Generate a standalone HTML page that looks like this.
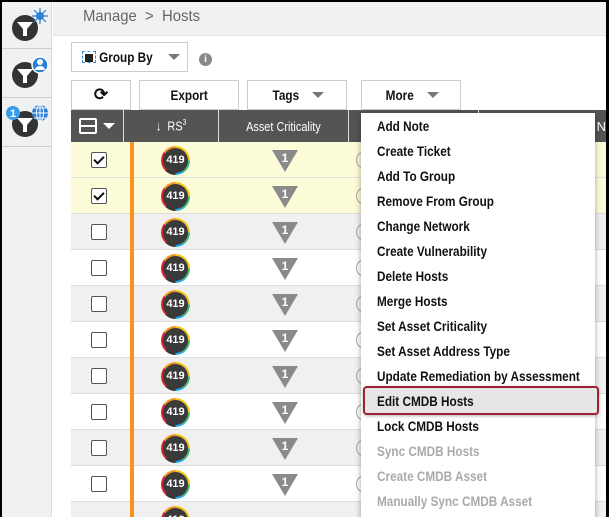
<!DOCTYPE html><html><head><style>
*{margin:0;padding:0;box-sizing:border-box}
body{width:609px;height:517px;overflow:hidden;background:#000;font-family:"Liberation Sans",sans-serif;position:relative}
#f{position:absolute;left:2px;top:2px;width:604px;height:515px;background:#fff;overflow:hidden}
.a{position:absolute}
.n{display:inline-block;transform:scaleX(.84);transform-origin:center;white-space:nowrap}
.side{left:0;top:0;width:50px;height:515px;background:#f0f1f1;border-right:1px solid #ddd}
.hd{left:51px;top:0;width:553px;height:34px;background:#f0f1f1;border-bottom:1px solid #e2e2e2}
.btn{position:absolute;height:30px;border:1px solid #ccc;background:#fff;font-weight:bold;font-size:14px;display:flex;align-items:center;justify-content:center;color:#111;white-space:nowrap}
.car{display:inline-block;width:0;height:0;border-left:6px solid transparent;border-right:6px solid transparent;border-top:6px solid #777;margin-left:10px}
.th{top:108px;height:32px;background:#545454;color:#fff;font-size:13px;display:flex;align-items:center;justify-content:center;border-right:1px solid #ddd;white-space:nowrap}
.row{position:absolute;left:69px;width:535px;height:36px;border-bottom:1px solid #ddd}
.cb{position:absolute;left:20px;top:10px;width:16px;height:16px;border:1px solid #555;background:#fff;border-radius:2px}
.cb.c::after{content:"";position:absolute;left:4px;top:1px;width:4px;height:8px;border:solid #111;border-width:0 2px 2px 0;transform:rotate(45deg)}
.ob{position:absolute;left:59px;top:0;width:4px;height:36px;background:#f7941d}
.bd{position:absolute;left:90px;top:4px;width:29px;height:29px;border-radius:50%;background:conic-gradient(#f7c31d 0 25%,#3cb878 25% 40%,#27aae1 40% 50%,#333 50% 62%,#d9262e 62% 85%,#f7941d 85%);}
.bd i{position:absolute;left:2px;top:2px;width:25px;height:25px;border-radius:50%;background:#3a3a3a;color:#fff;font-style:normal;font-weight:bold;font-size:11px;line-height:25px;text-align:center}
.tr{position:absolute;left:201px;top:8px;width:0;height:0;border-left:13px solid transparent;border-right:13px solid transparent;border-top:22px solid #8a8a8a}
.tr b{position:absolute;left:-13px;width:26px;top:-21px;color:#fff;font-size:12px;text-align:center;line-height:14px}
.ci{position:absolute;left:285px;top:9px;width:18px;height:18px;border-radius:50%;border:1.5px solid #aaa}
.menu{left:359px;top:111px;width:234px;height:410px;background:#fff;box-shadow:0 2px 6px rgba(0,0,0,.35)}
.mi{position:absolute;left:16px;font-weight:bold;font-size:14px;color:#111;transform:scaleX(.84);transform-origin:left;white-space:nowrap;margin-top:-1px}
.dis{color:#aaa}
</style></head><body><div id="f">
<div class="a side"></div>
<div class="a" style="left:0;top:46px;width:50px;border-top:1px solid #ccc"></div>
<div class="a" style="left:0;top:95px;width:50px;border-top:1px solid #ccc"></div>
<div class="a" style="left:0;top:144px;width:50px;border-top:1px solid #ccc"></div>
<svg class="a" style="left:8px;top:6px" width="40" height="36"><circle cx="15" cy="20" r="13" fill="#333"/><path d="M7 14h16l-6 7v7h-4v-7z" fill="#fff"/><circle cx="30" cy="8" r="4" fill="#2a7fd4"/><path d="M30 0v16M22 8h16M24 2l12 12M36 2L24 14" stroke="#2a7fd4" stroke-width="1.2"/></svg>
<svg class="a" style="left:8px;top:52px" width="40" height="36"><circle cx="15" cy="21" r="13" fill="#333"/><path d="M7 15h16l-6 7v7h-4v-7z" fill="#fff"/><circle cx="30" cy="11" r="8" fill="#2a7fd4" stroke="#fff" stroke-width="1.5"/><circle cx="30" cy="8" r="3" fill="#fff"/><path d="M25 16a5 4 0 0 1 10 0z" fill="#fff"/></svg>
<svg class="a" style="left:2px;top:100px" width="48" height="40"><circle cx="21" cy="22" r="13" fill="#333"/><path d="M13 16h16l-6 7v7h-4v-7z" fill="#fff"/><circle cx="36" cy="11" r="8" fill="#2a7fd4"/><path d="M28 11h16M36 3v16M30 6h12M30 16h12" stroke="#fff" stroke-width="1"/><ellipse cx="36" cy="11" rx="3.5" ry="8" fill="none" stroke="#fff"/><circle cx="9" cy="11" r="7" fill="#3a9ce8"/><text x="9" y="15" font-size="11" fill="#fff" text-anchor="middle" font-family="Liberation Sans" font-weight="bold">1</text></svg>
<div class="a hd"></div>
<div class="a" style="left:81px;top:6px;font-size:16px;color:#666;transform:scaleX(.93);transform-origin:left;white-space:nowrap">Manage &nbsp;&gt;&nbsp; Hosts</div>
<div class="btn" style="left:69px;top:40px;width:117px;justify-content:flex-start;padding-left:10px"><span style="display:inline-block;width:14px;height:12px;border:1px dashed #3a8ad4;position:relative;margin-right:4px"><span style="position:absolute;left:2px;top:2px;width:8px;height:8px;background:#222"></span></span><span class="n" style="margin:0 -6px">Group By</span><span class="car" style="margin-left:16px"></span></div>
<div class="a" style="left:197px;top:51px;width:13px;height:13px;border-radius:50%;background:#888;color:#fff;font-size:10px;font-weight:bold;text-align:center;line-height:13px">i</div>
<div class="btn" style="left:69px;top:78px;width:60px;font-size:17px">⟳</div>
<div class="btn" style="left:137px;top:78px;width:100px"><span class="n">Export</span></div>
<div class="btn" style="left:245px;top:78px;width:100px"><span class="n">Tags</span><span class="car"></span></div>
<div class="btn" style="left:359px;top:78px;width:100px"><span class="n">More</span><span class="car"></span></div>
<div class="a th" style="left:69px;width:53px"><span style="width:18px;height:16px;border:2px solid #fff;border-radius:2px;position:relative;display:inline-block"><span style="position:absolute;left:0;right:0;top:5px;border-top:2px solid #fff"></span></span><span class="car" style="border-top-color:#fff;margin-left:6px"></span></div>
<div class="a th" style="left:122px;width:95px"><span class="n">↓&nbsp; RS<sup style="font-size:8px">3</sup></span></div>
<div class="a th" style="left:217px;width:130px"><span class="n">Asset Criticality</span></div>
<div class="a th" style="left:347px;width:130px"></div>
<div class="a th" style="left:477px;width:127px;justify-content:flex-end;border:none">t N</div>
<div class="row" style="top:140px;background:#fdfcd8"><div class="cb c"></div><div class="ob"></div><div class="bd"><i>419</i></div><div class="tr"><b>1</b></div><div class="ci"></div></div>
<div class="row" style="top:176px;background:#fdfcd8"><div class="cb c"></div><div class="ob"></div><div class="bd"><i>419</i></div><div class="tr"><b>1</b></div><div class="ci"></div></div>
<div class="row" style="top:212px;background:#f0f0f0"><div class="cb"></div><div class="ob"></div><div class="bd"><i>419</i></div><div class="tr"><b>1</b></div><div class="ci"></div></div>
<div class="row" style="top:248px"><div class="cb"></div><div class="ob"></div><div class="bd"><i>419</i></div><div class="tr"><b>1</b></div><div class="ci"></div></div>
<div class="row" style="top:284px;background:#f0f0f0"><div class="cb"></div><div class="ob"></div><div class="bd"><i>419</i></div><div class="tr"><b>1</b></div><div class="ci"></div></div>
<div class="row" style="top:320px"><div class="cb"></div><div class="ob"></div><div class="bd"><i>419</i></div><div class="tr"><b>1</b></div><div class="ci"></div></div>
<div class="row" style="top:356px;background:#f0f0f0"><div class="cb"></div><div class="ob"></div><div class="bd"><i>419</i></div><div class="tr"><b>1</b></div><div class="ci"></div></div>
<div class="row" style="top:392px"><div class="cb"></div><div class="ob"></div><div class="bd"><i>419</i></div><div class="tr"><b>1</b></div><div class="ci"></div></div>
<div class="row" style="top:428px;background:#f0f0f0"><div class="cb"></div><div class="ob"></div><div class="bd"><i>419</i></div><div class="tr"><b>1</b></div><div class="ci"></div></div>
<div class="row" style="top:464px"><div class="cb"></div><div class="ob"></div><div class="bd"><i>419</i></div><div class="tr"><b>1</b></div><div class="ci"></div></div>
<div class="row" style="top:500px;background:#f0f0f0"><div class="ob"></div><div class="bd"><i>419</i></div></div>
<div class="a menu">
<div class="mi" style="top:6px">Add Note</div>
<div class="mi" style="top:31px">Create Ticket</div>
<div class="mi" style="top:56px">Add To Group</div>
<div class="mi" style="top:81px">Remove From Group</div>
<div class="mi" style="top:106px">Change Network</div>
<div class="mi" style="top:131px">Create Vulnerability</div>
<div class="mi" style="top:156px">Delete Hosts</div>
<div class="mi" style="top:181px">Merge Hosts</div>
<div class="mi" style="top:206px">Set Asset Criticality</div>
<div class="mi" style="top:231px">Set Asset Address Type</div>
<div class="mi" style="top:256px">Update Remediation by Assessment</div>
<div class="a" style="left:2px;top:273px;width:236px;height:29px;background:#e6e6e6;border:2.5px solid #9b2335;border-radius:4px;box-shadow:0 1px 3px rgba(0,0,0,.3)"></div>
<div class="mi" style="top:281px">Edit CMDB Hosts</div>
<div class="mi" style="top:306px">Lock CMDB Hosts</div>
<div class="mi dis" style="top:331px">Sync CMDB Hosts</div>
<div class="mi dis" style="top:356px">Create CMDB Asset</div>
<div class="mi dis" style="top:381px">Manually Sync CMDB Asset</div>
</div>
</div></body></html>
